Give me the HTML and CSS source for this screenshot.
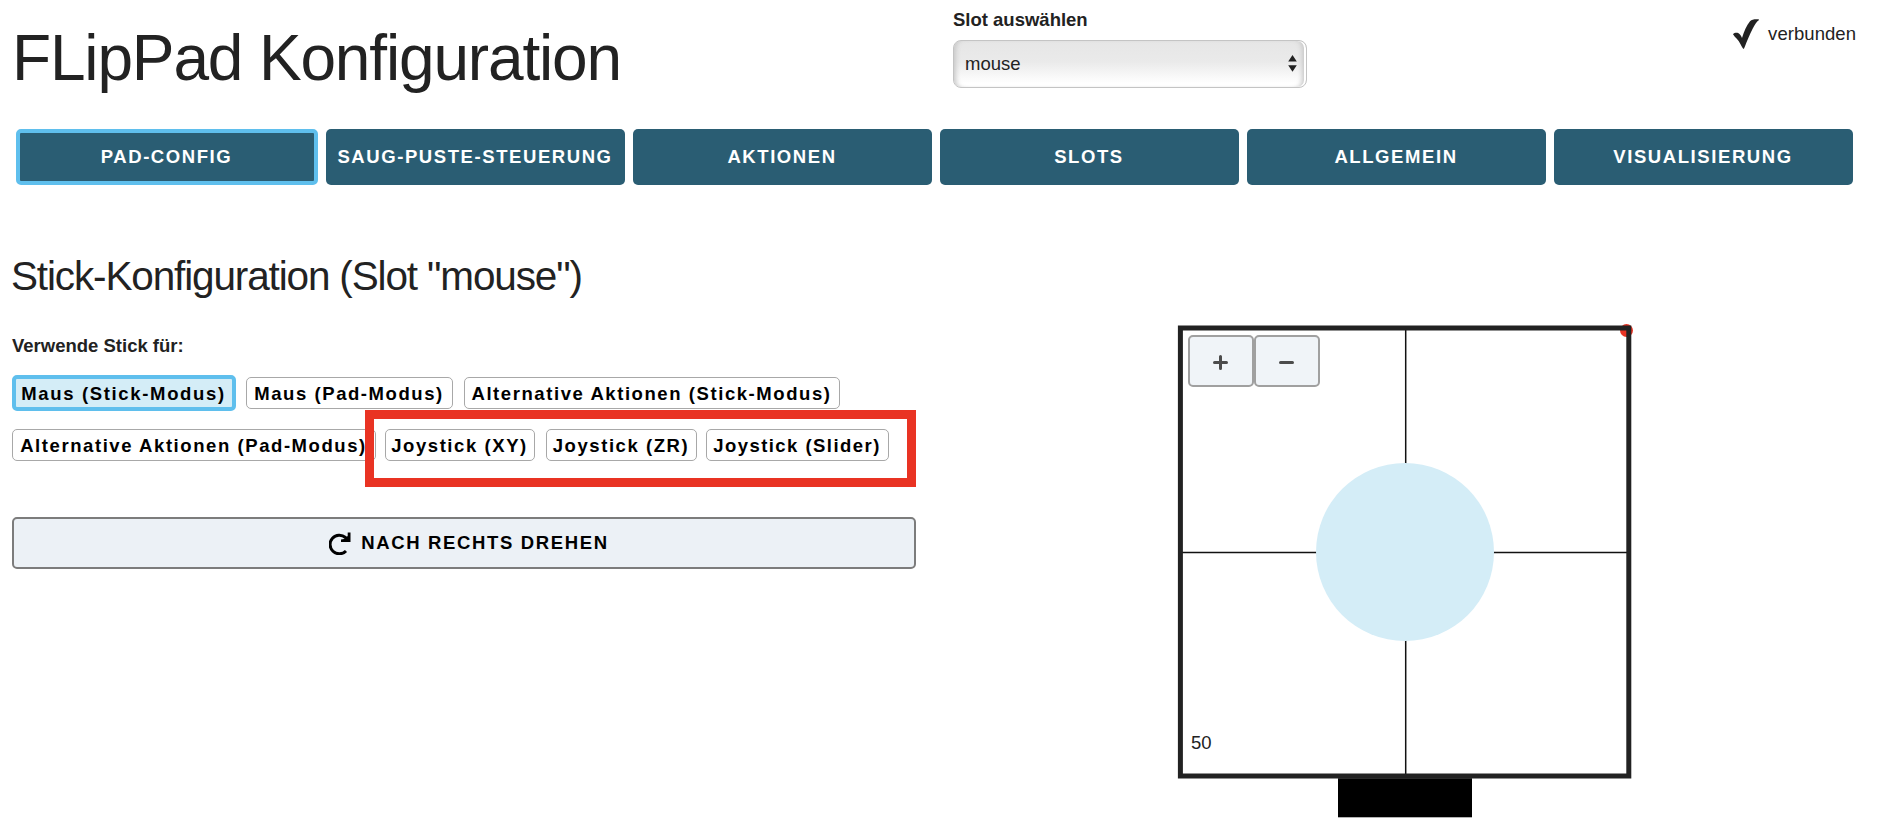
FILE: index.html
```html
<!DOCTYPE html>
<html lang="de">
<head>
<meta charset="utf-8">
<title>FLipPad Konfiguration</title>
<link rel="stylesheet" href="styles.css">
</head>
<body>
<header class="header">
  <h1 class="title">FLipPad Konfiguration</h1>
  <div class="slot">
    <span class="slot-label">Slot auswählen</span>
    <div class="select">
      <span>mouse</span>
      <svg class="arrows" width="9" height="17" viewBox="0 0 9 17"><path d="M4.500 0 8.800 6.500H.2ZM.2 10.200H8.800L4.500 16.700Z" fill="#222"/></svg>
    </div>
  </div>
  <div class="status">
    <svg width="26" height="30" viewBox="0 0 26 30"><path d="M0 15.300C1.500 13.600 4.800 13.300 6.500 15 7.800 16.300 8.500 17.500 9 19C11 12.500 13.500 6.500 17 2.300 19 .200 22 0 25.800.300V1.300C23.600 2.800 21.800 5.500 19.500 10 16.500 16 14 22 11.900 27.500L10.900 29.700H10.200L9 28C7 24 4.500 19.800 1.800 17.800Z" fill="#222"/></svg>
    <span>verbunden</span>
  </div>
</header>
<nav class="nav">
  <button class="tab tab-active">PAD-CONFIG</button>
  <button class="tab">SAUG-PUSTE-STEUERUNG</button>
  <button class="tab">AKTIONEN</button>
  <button class="tab">SLOTS</button>
  <button class="tab">ALLGEMEIN</button>
  <button class="tab">VISUALISIERUNG</button>
</nav>
<main class="main">
  <section class="config">
    <h2 class="subtitle">Stick-Konfiguration (Slot "mouse")</h2>
    <div class="label">Verwende Stick für:</div>
    <div class="modes">
      <div class="row">
        <button class="mode mode-active w-stick">Maus (Stick-Modus)</button>
        <button class="mode w-pad">Maus (Pad-Modus)</button>
        <button class="mode w-alt-stick">Alternative Aktionen (Stick-Modus)</button>
      </div>
      <div class="row">
        <button class="mode w-alt-pad">Alternative Aktionen (Pad-Modus)</button>
        <button class="mode w-xy">Joystick (XY)</button>
        <button class="mode w-zr">Joystick (ZR)</button>
        <button class="mode w-slider">Joystick (Slider)</button>
      </div>
      <div class="highlight"></div>
    </div>
    <button class="rotate">
      <svg width="22" height="23" viewBox="0 0 22 23"><path d="M17 19A9.300 9.300 0 1 1 16.500 5.500L18 7" fill="none" stroke="#000" stroke-width="3"/><path d="M21.500 .5V10H12V7.500L15 7 18.700 4V.5Z"/></svg>
      <span>NACH RECHTS DREHEN</span>
    </button>
  </section>
  <section class="pad">
    <svg class="canvas" width="456" height="494" viewBox="0 0 456 494">
      <circle cx="449.500" cy="6.500" r="6.500" fill="#e93323"/>
      <path d="M228.700 5V453M3 228.500H452" stroke="#111" stroke-width="1.500"/>
      <circle cx="228" cy="228" r="89" fill="#d4edf7"/>
      <rect x="3.400" y="4" width="448.400" height="448" fill="none" stroke="#222" stroke-width="5"/>
      <rect x="161" y="454.300" width="134" height="39" fill="#000"/>
    </svg>
    <div class="zoom">
      <button class="zoom-btn"><svg width="15" height="15" viewBox="0 0 15 15"><path d="M1.500 7.500H13.500M7.500 1.500V13.500" stroke="#4c4c4c" stroke-width="3" stroke-linecap="round"/></svg></button>
      <button class="zoom-btn"><svg width="15" height="15" viewBox="0 0 15 15"><path d="M1.500 7.500H13.500" stroke="#4c4c4c" stroke-width="3" stroke-linecap="round"/></svg></button>
    </div>
    <span class="value">50</span>
  </section>
</main>
</body>
</html>
```
FILE: styles.css
```css
* { box-sizing: border-box; }
body {
  margin: 0;
  height: 822px;
  overflow: hidden;
  background: #fff;
  color: #222;
  font: 18.5px/24px "Liberation Sans", Arial, sans-serif;
}
button {
  margin: 0;
  padding: 0;
  font: bold 18.5px/24px "Liberation Sans", Arial, sans-serif;
  letter-spacing: 1.65px;
  white-space: nowrap;
}
h1, h2 { margin: 0; font-weight: 400; white-space: nowrap; }
svg { display: block; flex: none; }
.header { display: flex; height: 129px; padding-left: 12px; }
.title { width: 941px; padding-top: 20px; font-size: 64px; line-height: 76px; letter-spacing: -1.16px; }
.slot { width: 354px; padding-top: 8px; }
.slot-label { display: block; font-weight: bold; }
.select {
  display: flex;
  align-items: center;
  justify-content: space-between;
  height: 48px;
  margin-top: 8px;
  padding: 0 9px 1px 11px;
  border: 1px solid #c4c4c4;
  border-radius: 8px;
  background: linear-gradient(#e6e6e6, #eaeaea 45%, #fff 92%);
  box-shadow: inset -2px 0 0 #fff, inset 5px 0 5px -3px #c8c8c8, inset -7px 0 5px -3px #c8c8c8;
}
.status { display: flex; gap: 9px; margin-left: auto; padding: 19px 41px 0 0; }
.status span { padding-top: 3px; letter-spacing: .05px; }
.nav { display: grid; grid-template-columns: 302px repeat(5, 299px); gap: 8px; padding-left: 16px; }
.tab { height: 55.5px; padding-right: 1px; border: 0; border-radius: 5px; background: #2a5d73; color: #fff; letter-spacing: 1.58px; }
.tab-active { border: 4px solid #5fbfed; }
.main { display: flex; padding-left: 12px; }
.config { width: 904px; padding-top: 66px; }
.subtitle { margin-left: -1px; font-size: 40.5px; line-height: 50px; letter-spacing: -1.14px; }
.label { margin-top: 33px; font-weight: bold; }
.modes { position: relative; padding-top: 17px; }
.row { display: flex; align-items: center; height: 36px; }
.row + .row { margin-top: 16px; }
.mode { height: 32px; padding: 3px 1px 0 0; border: 1px solid #a8a8a8; border-radius: 5px; background: #fff; color: #000; letter-spacing: 1.57px; }
.mode-active { height: 36px; border: 4px solid #5fbfed; background: #d4edf7; letter-spacing: 1.66px; }
.w-stick { width: 224px; margin-right: 10px; }
.w-pad { width: 207px; margin-right: 11px; }
.w-alt-stick { width: 376px; }
.w-alt-pad { width: 364px; margin-right: 9px; }
.w-xy { width: 150px; margin-right: 11px; }
.w-zr { width: 151px; margin-right: 9px; }
.w-slider { width: 183px; letter-spacing: 1.45px; }
.highlight { position: absolute; left: 353px; top: 52px; width: 551px; height: 77px; border: 9px solid #e93323; }
.rotate {
  display: flex;
  align-items: center;
  justify-content: center;
  gap: 10px;
  width: 904px;
  height: 52px;
  margin-top: 54px;
  padding: 1px 0 0 10px;
  border: 2px solid #7c7c7c;
  border-radius: 5px;
  background: #ecf1f6;
  color: #000;
}
.pad { position: relative; width: 456px; height: 494px; margin: 139px 0 0 261px; }
.zoom { position: absolute; left: 11px; top: 11px; display: flex; }
.zoom-btn {
  display: flex;
  align-items: center;
  justify-content: center;
  width: 66px;
  height: 52px;
  padding: 3px 1px 0 0;
  border: 2px solid #a0a0a0;
  border-radius: 5px;
  background: #f0f4f8;
}
.value { position: absolute; left: 14px; top: 407px; }
```
